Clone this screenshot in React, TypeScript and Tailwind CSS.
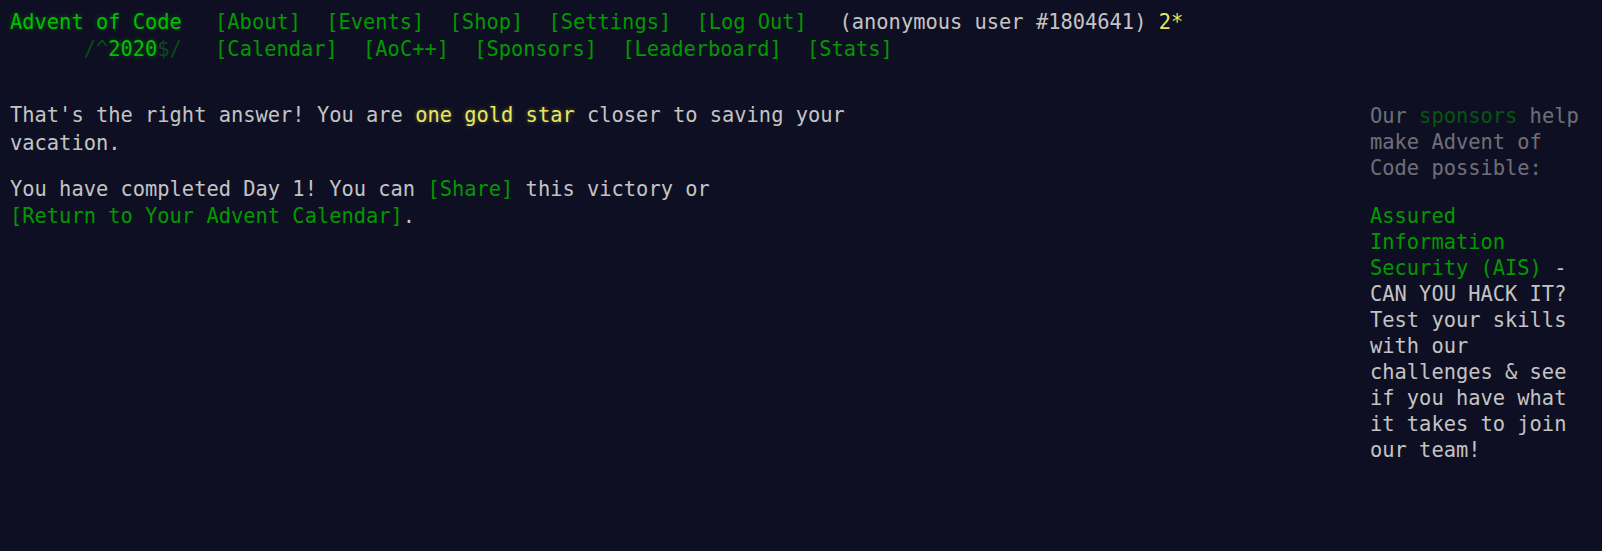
import React from 'react';

const glow = '[text-shadow:0_0_5px_#00cc0066]';

const topLinks = ['[About]', '[Events]', '[Shop]', '[Settings]', '[Log Out]'];
const eventLinks = ['[Calendar]', '[AoC++]', '[Sponsors]', '[Leaderboard]', '[Stats]'];

function NavList({ items }: { items: string[] }) {
  return (
    <ul className="flex">
      {items.map((item) => (
        <li key={item} className="px-[12.6px]">
          <a className="text-[#009900] whitespace-pre">{item}</a>
        </li>
      ))}
    </ul>
  );
}

function Header() {
  return (
    <header className="whitespace-pre leading-[26.5px] mb-[40px]">
      <div className="flex">
        <h1 className={`pr-[20.6px] font-normal text-[#00c000] ${glow}`}>Advent of Code</h1>
        <NavList items={topLinks} />
        <div className="pl-[20px] text-[#c4c4c4]">
          (anonymous user #1804641) <span className="text-[#e8e85c]">2*</span>
        </div>
      </div>
      <div className="flex">
        <h1 className="pr-[20.6px] font-normal text-[#00c000]">
          {'      '}
          <span className="opacity-[0.33]">/^</span>
          <span className={glow}>2020</span>
          <span className="opacity-[0.33]">$/</span>
        </h1>
        <NavList items={eventLinks} />
      </div>
    </header>
  );
}

function Sidebar() {
  return (
    <div className="w-[216px] mr-[16px] mt-[1px] shrink-0 leading-[26px]">
      <p className="text-[#cccccc] opacity-50">
        Our <a className="text-[#009900]">sponsors</a> help make Advent of Code possible:
      </p>
      <p className="mt-[22px] text-[#c4c4c4]">
        <a className="text-[#009900]">Assured Information Security (AIS)</a> - CAN YOU HACK IT? Test your skills with our
        challenges &amp; see if you have what it takes to join our team!
      </p>
    </div>
  );
}

export default function App() {
  return (
    <div
      className="min-h-screen bg-[#0f0f23] text-[#c4c4c4] text-[20.4px] pl-[10px] pt-[9px]"
      style={{ fontFamily: '"DejaVu Sans Mono", "Liberation Mono", monospace' }}
    >
      <Header />
      <div className="flex">
        <main className="flex-1">
          <article className="w-[860px] leading-[27.5px]">
            <p>
              That's the right answer! You are{' '}
              <em className="not-italic text-[#e8e85c] [text-shadow:0_0_4px_#ffff6655]">one gold star</em> closer to
              saving your vacation.
            </p>
            <p className="mt-[18.5px]">
              You have completed Day 1! You can <a className="text-[#009900]">[Share]</a> this victory or{' '}
              <a className="text-[#009900] whitespace-nowrap">[Return to Your Advent Calendar]</a>.
            </p>
          </article>
        </main>
        <Sidebar />
      </div>
    </div>
  );
}
